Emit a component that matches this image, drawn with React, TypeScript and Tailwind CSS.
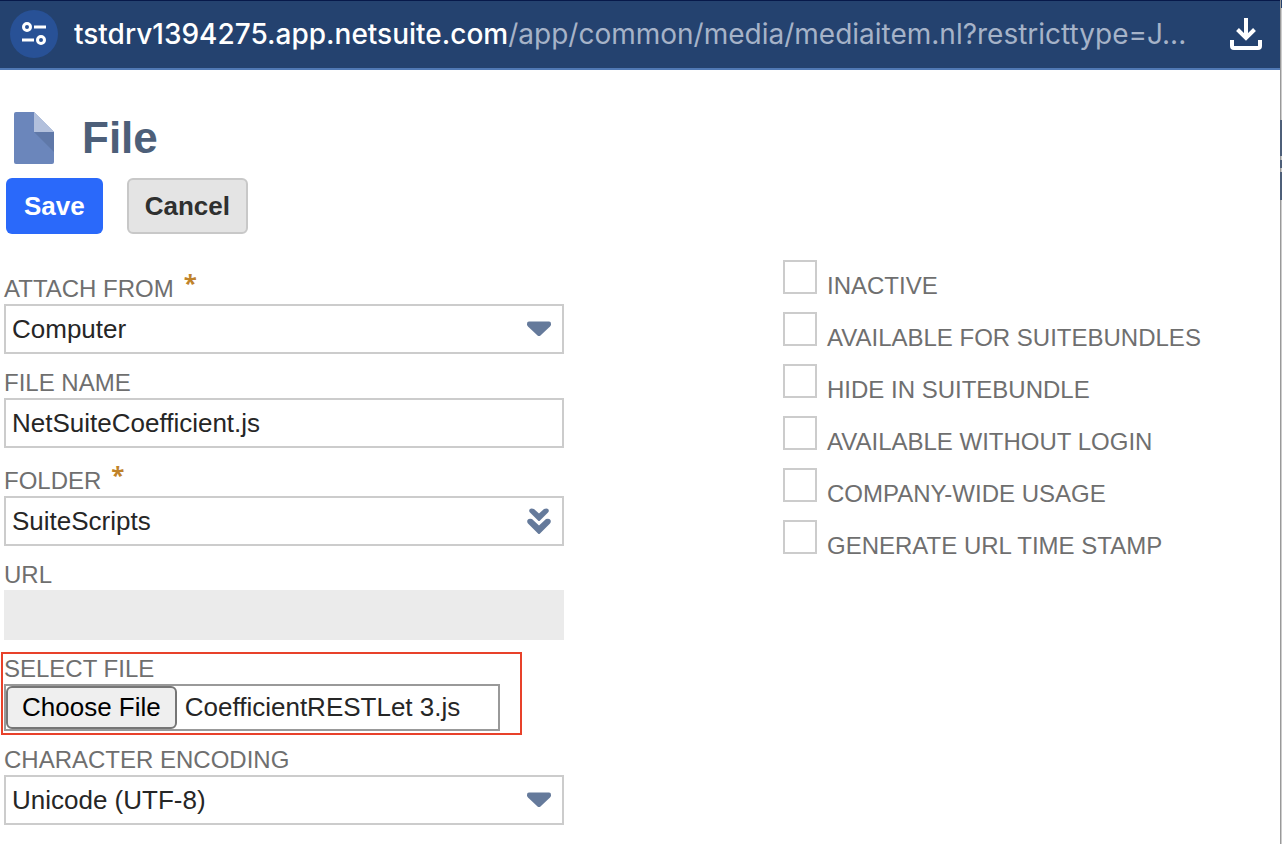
import { useRef } from 'react';
import type { ReactNode } from 'react';

const options = [
  { id: 'inactive', label: 'INACTIVE' },
  { id: 'bundles', label: 'AVAILABLE FOR SUITEBUNDLES' },
  { id: 'hide', label: 'HIDE IN SUITEBUNDLE' },
  { id: 'nologin', label: 'AVAILABLE WITHOUT LOGIN' },
  { id: 'company', label: 'COMPANY-WIDE USAGE' },
  { id: 'timestamp', label: 'GENERATE URL TIME STAMP' },
];

function ArrowIcon() {
  return (
    <svg width="24" height="16" viewBox="0 0 24 16" fill="#657a9b" aria-hidden="true">
      <path d="M2 .5h20q2 0 2 2v1q0 1-1 2l-9.500 9q-1.500 1-3 0L1 5.500q-1-1-1-2v-1q0-2 2-2z" />
    </svg>
  );
}

function DoubleArrowIcon() {
  return (
    <svg width="24" height="26" viewBox="0 0 24 26" fill="#657a9b" aria-hidden="true">
      <path d="M2.500 1.500Q4-.2 7 1l5 4.500L17 1q3-1.200 4.500.5.8 1.500-.5 3l-8 8q-1 1-2 0l-8-8q-1.300-1.500-.5-3z" />
      <path d="M.5 12Q2 10 5 11l7 6.500L19 11q3-1 4.500 1 .8 2-.5 3.500l-10 10q-1 1-2 0l-10-10Q-.3 14 .5 12z" />
    </svg>
  );
}

function FieldLabel({ htmlFor, required, children }: { htmlFor: string; required?: boolean; children: ReactNode }) {
  return (
    <label htmlFor={htmlFor} className="flex h-[30px] items-center text-2xl leading-[30px] text-[#6f6f6f]">
      {children}
      {required && <span className="ml-2.5 pb-3 font-['Open_Sans',sans-serif] font-bold text-[#c0832a]">*</span>}
    </label>
  );
}

function SelectBox({ id, value, icon }: { id: string; value: string; icon: ReactNode }) {
  return (
    <div className="grid items-center">
      <select
        id={id}
        className="col-start-1 row-start-1 h-[50px] w-full appearance-none border-2 border-[#ccc] bg-white px-1.5 text-[26px] text-[#262626]"
      >
        <option>{value}</option>
      </select>
      <span className="pointer-events-none col-start-1 row-start-1 mr-[13px] justify-self-end">{icon}</span>
    </div>
  );
}

export default function App() {
  const fileInput = useRef<HTMLInputElement>(null);

  return (
    <div className="flex min-h-screen bg-white font-['Liberation_Sans',Arial,sans-serif]">
      <div className="min-w-0 flex-1">
        <header className="flex h-[70px] items-center border-t border-b-2 border-t-[#07194a] border-b-[#5079b5] bg-[#24426f] pr-4 pb-px pl-2.5">
          <button aria-label="View site information" className="flex size-12 shrink-0 items-center justify-center rounded-full bg-[#285196]">
            <svg width="26" height="24" viewBox="0 0 26 24" fill="none" stroke="#fff" strokeWidth="3">
              <circle cx="6" cy="5" r="3.500" />
              <path d="M13 5h12M1 18h12" />
              <circle cx="20" cy="18" r="3.500" />
            </svg>
          </button>
          <div className="ml-4 min-w-0 flex-1 truncate font-['Inter',sans-serif] text-[28px] leading-9 text-[#a6b3c8]">
            <span className="font-medium text-white">tstdrv1394275.app.netsuite.com</span>/app/common/media/mediaitem.nl?restricttype=J...
          </div>
          <button aria-label="Downloads" className="shrink-0">
            <svg width="36" height="36" viewBox="0 0 36 36" fill="none" stroke="#fff" strokeWidth="4">
              <path d="M18 2v20M9.500 13.500l8.500 8.500 8.500-8.500" />
              <path d="M4 24v6q0 2 2 2h24q2 0 2-2v-6" />
            </svg>
          </button>
        </header>

        <main className="px-1 pt-10">
          <div className="flex items-center gap-7 pl-2.5">
            <svg width="40" height="52" viewBox="0 0 40 52" aria-hidden="true">
              <path d="M2 0h18l20 20v30q0 2-2 2H2q-2 0-2-2V2Q0 0 2 0z" fill="#6b86bb" />
              <path d="M20 0l20 20H20z" fill="#b2c0dc" />
              <path d="M20 20h20v20z" fill="#5f78a8" />
            </svg>
            <h1 className="text-[44px] leading-[56px] font-bold text-[#4d5f79]">File</h1>
          </div>

          <div className="mt-3 flex gap-6 pl-0.5">
            <button className="h-14 rounded-md bg-[#2a69fa] px-[18px] text-[26px] font-bold text-white">Save</button>
            <button className="h-14 rounded-md border-2 border-[#c8c8c8] bg-[#e4e4e4] px-4 text-[26px] font-bold text-[#2f302f]">Cancel</button>
          </div>

          <form className="flex pt-[26px]">
            <div className="w-[560px] pt-3.5">
              <FieldLabel htmlFor="attach" required>ATTACH FROM</FieldLabel>
              <SelectBox id="attach" value="Computer" icon={<ArrowIcon />} />

              <div className="pt-3.5">
                <FieldLabel htmlFor="filename">FILE NAME</FieldLabel>
                <input
                  id="filename"
                  type="text"
                  defaultValue="NetSuiteCoefficient.js"
                  className="block h-[50px] w-full border-2 border-[#ccc] px-1.5 text-[26px] text-[#262626]"
                />
              </div>

              <div className="pt-[18px]">
                <FieldLabel htmlFor="folder" required>FOLDER</FieldLabel>
                <SelectBox id="folder" value="SuiteScripts" icon={<DoubleArrowIcon />} />
              </div>

              <div className="pt-3.5">
                <FieldLabel htmlFor="url">URL</FieldLabel>
                <input id="url" type="text" readOnly className="block h-[50px] w-full bg-[#ebebeb] px-2 text-[26px]" />
              </div>

              <div className="mt-3 -ml-[3px] w-[521px] border-2 border-[#e8412a] px-px pb-0.5">
                <FieldLabel htmlFor="upload">SELECT FILE</FieldLabel>
                <div className="flex h-[47px] w-[496px] items-center border-2 border-[#999] text-[26px]">
                  <button
                    type="button"
                    onClick={() => fileInput.current?.click()}
                    className="h-[43px] rounded-md border-2 border-[#767676] bg-[#efefef] px-3.5 text-black"
                  >
                    Choose File
                  </button>
                  <span className="ml-2 text-[#262626]">CoefficientRESTLet 3.js</span>
                  <input ref={fileInput} id="upload" type="file" className="sr-only" />
                </div>
              </div>

              <div className="pt-2.5 pb-[18px]">
                <FieldLabel htmlFor="encoding">CHARACTER ENCODING</FieldLabel>
                <SelectBox id="encoding" value="Unicode (UTF-8)" icon={<ArrowIcon />} />
              </div>
            </div>

            <div className="ml-[219px] flex flex-1 flex-col gap-4">
              {options.map((option) => (
                <div key={option.id} className="flex h-9 gap-2.5">
                  <input id={option.id} type="checkbox" className="size-[34px] shrink-0 appearance-none border-2 border-[#ccc] bg-white" />
                  <label htmlFor={option.id} className="pt-2.5 text-2xl leading-8 whitespace-nowrap text-[#6f6f6f]">
                    {option.label}
                  </label>
                </div>
              ))}
            </div>
          </form>
        </main>
      </div>

      {/* edge of the window behind */}
      <div className="flex w-0.5 shrink-0 flex-col border-l border-[#999] bg-[#ccc]">
        <div className="h-2 bg-[#24426f]" />
        <div className="mt-28 -ml-px h-9 bg-[#4d5f79]" />
        <div className="mt-1 -ml-px h-2 bg-[#4d5f79]" />
        <div className="mt-1 -ml-px h-7 bg-[#4d5f79]" />
      </div>
    </div>
  );
}
